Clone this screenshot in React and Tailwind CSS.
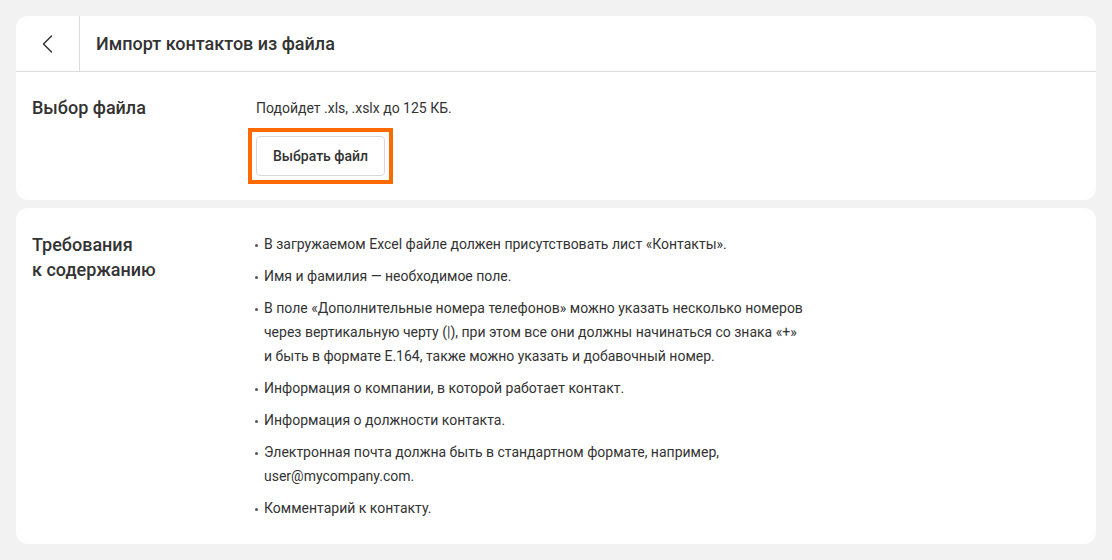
import React from 'react';

const requirements = [
  ['В загружаемом Excel файле должен присутствовать лист «Контакты».'],
  ['Имя и фамилия — необходимое поле.'],
  [
    'В поле «Дополнительные номера телефонов» можно указать несколько номеров',
    'через вертикальную черту (|), при этом все они должны начинаться со знака «+»',
    'и быть в формате E.164, также можно указать и добавочный номер.',
  ],
  ['Информация о компании, в которой работает контакт.'],
  ['Информация о должности контакта.'],
  ['Электронная почта должна быть в стандартном формате, например,', 'user@mycompany.com.'],
  ['Комментарий к контакту.'],
];

const App = () => {
  return (
    <div className="min-h-screen bg-[#f1f2f1] p-4 text-[#333333]" style={{ fontFamily: 'Roboto, "Noto Sans", sans-serif' }}>
      <div className="flex flex-col gap-2">
        {/* Header + file choice */}
        <div className="bg-white rounded-xl">
          <div className="flex h-[56px] border-b border-[#dddddd]">
            <button className="w-16 flex items-center justify-center border-r border-[#dddddd]">
              <svg width="11" height="18" viewBox="0 0 11 18" fill="none">
                <path d="M9.5 1 L1.5 9 L9.5 17" stroke="#333333" strokeWidth="1.5" strokeLinecap="round" strokeLinejoin="round" />
              </svg>
            </button>
            <div className="flex items-center pl-4 text-[18px] font-medium">Импорт контактов из файла</div>
          </div>

          <div className="flex px-4 pt-6 pb-4">
            <div className="w-[224px] text-[18px] leading-6 font-medium">Выбор файла</div>
            <div className="flex flex-col items-start">
              <p className="text-[14px] leading-6">Подойдет .xls, .xslx до 125 КБ.</p>
              <div className="mt-2 -ml-2 border-4 border-[#ff6a00] p-1">
                <button className="h-[40px] px-4 border border-[#d9d9d9] rounded text-[14px] font-medium bg-white">
                  Выбрать файл
                </button>
              </div>
            </div>
          </div>
        </div>

        {/* Requirements */}
        <div className="bg-white rounded-xl flex px-4 pt-6 pb-6">
          <div className="w-[224px] text-[18px] leading-[25px] font-medium">
            Требования
            <br />к содержанию
          </div>
          <ul className="flex flex-col gap-2 text-[14px] leading-6 -ml-px">
            {requirements.map((lines, i) => (
              <li key={i} className="flex">
                <span className="w-[3px] h-[3px] shrink-0 rounded-full bg-[#555555] mt-[12px] mr-[6px]"></span>
                <span>
                  {lines.map((line, j) => (
                    <span key={j} className="block">{line}</span>
                  ))}
                </span>
              </li>
            ))}
          </ul>
        </div>
      </div>
    </div>
  );
};

export default App;
